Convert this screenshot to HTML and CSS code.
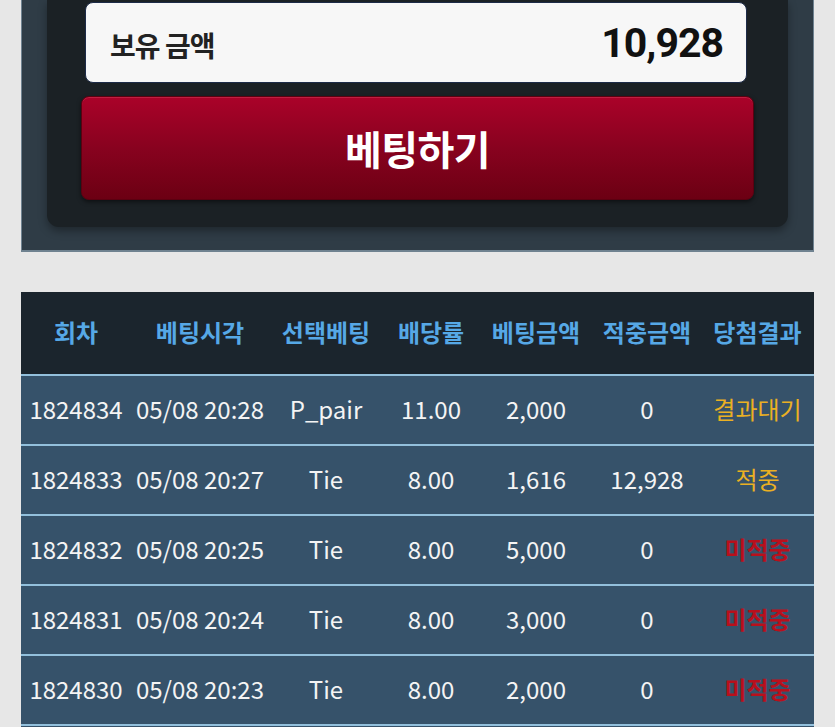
FILE: index.html
```html
<!DOCTYPE html>
<html>

<head>
  <meta charset="utf-8">
  <meta name="viewport" content="width=device-width">
  <title>베팅</title>
	<link rel="stylesheet" href="styles.css">
</head>

<body>
	<div class="wrap">
		<div class="bet-panel">
			<div class="bet-box">
				<div class="balance">
					<span class="balance-label">보유 금액</span>
					<span class="balance-value">10,928</span>
				</div>
				<button class="bet-btn">베팅하기</button>
			</div>
		</div>

		<table class="history">
			<colgroup>
				<col style="width:110px">
				<col style="width:138px">
				<col style="width:114px">
				<col style="width:96px">
				<col style="width:114px">
				<col style="width:108px">
				<col style="width:113px">
			</colgroup>
			<thead>
				<tr>
					<th>회차</th>
					<th>베팅시각</th>
					<th>선택베팅</th>
					<th>배당률</th>
					<th>베팅금액</th>
					<th>적중금액</th>
					<th>당첨결과</th>
				</tr>
			</thead>
			<tbody>
				<tr>
					<td>1824834</td><td>05/08 20:28</td><td>P_pair</td><td>11.00</td><td>2,000</td><td>0</td><td class="wait">결과대기</td>
				</tr>
				<tr>
					<td>1824833</td><td>05/08 20:27</td><td>Tie</td><td>8.00</td><td>1,616</td><td>12,928</td><td class="win">적중</td>
				</tr>
				<tr>
					<td>1824832</td><td>05/08 20:25</td><td>Tie</td><td>8.00</td><td>5,000</td><td>0</td><td class="lose">미적중</td>
				</tr>
				<tr>
					<td>1824831</td><td>05/08 20:24</td><td>Tie</td><td>8.00</td><td>3,000</td><td>0</td><td class="lose">미적중</td>
				</tr>
				<tr>
					<td>1824830</td><td>05/08 20:23</td><td>Tie</td><td>8.00</td><td>2,000</td><td>0</td><td class="lose">미적중</td>
				</tr>
				<tr class="empty">
					<td></td><td></td><td></td><td></td><td></td><td></td><td></td>
				</tr>
			</tbody>
		</table>
	</div>
</body>

</html>
```

FILE: styles.css
```css
html {
  height: 100%;
  width: 100%;
}

body {
	margin: 0;
	background-color: #e7e7e7;
	font-family: "Noto Sans CJK KR", "Noto Sans", sans-serif;
	overflow: hidden;
}

.wrap {
	padding: 0 21px;
}

.bet-panel {
	height: 250px;
	background-color: #2f3c46;
	border: 1px solid #6f8290;
	border-top: 0;
	border-bottom-width: 2px;
}

.bet-box {
	margin: 0 25px;
	padding: 2px 36px 27px;
	background-color: #1b2125;
	border-radius: 0 0 12px 12px;
	box-shadow: 0 4px 8px rgba(0, 0, 0, 0.35);
}

.balance {
	display: flex;
	align-items: center;
	justify-content: space-between;
	height: 79px;
	margin: 0 5px 13px 2px;
	padding: 0 23px 0 24px;
	background-color: #f7f7f7;
	border: 1px solid #1d2b48;
	border-radius: 8px;
}

.balance-label {
	font-size: 28px;
	font-weight: bold;
	color: #222;
	letter-spacing: -1px;
	padding-top: 4px;
}

.balance-value {
	font-family: Roboto, "Liberation Sans", sans-serif;
	font-size: 41px;
	font-weight: bold;
	color: #111;
	letter-spacing: -1px;
}

.bet-btn {
	display: block;
	width: calc(100% + 4px);
	height: 104px;
	margin-left: -2px;
	background: linear-gradient(#aa0229, #88021f 50%, #6c0013);
	border: 1px solid #5c0010;
	border-radius: 8px;
	box-shadow: inset 0 1px 0 rgba(255, 120, 140, 0.25), 0 2px 4px rgba(0, 0, 0, 0.5);
	color: white;
	font-family: "Noto Sans CJK KR", sans-serif;
	font-size: 40px;
	font-weight: bold;
	letter-spacing: -0.5px;
}

.history {
	width: 100%;
	margin-top: 40px;
	border-collapse: collapse;
	table-layout: fixed;
}

.history th {
	height: 78px;
	padding: 0 0 4px;
	background-color: #1b252d;
	color: #56a8e6;
	font-size: 24px;
	font-weight: bold;
	text-align: center;
	white-space: nowrap;
}

.history td {
	height: 65px;
	padding: 0 0 3px;
	background-color: #36526a;
	border-top: 2px solid #93c0dc;
	color: #f4f4f4;
	font-size: 24px;
	text-align: center;
	white-space: nowrap;
}

.history td.wait,
.history td.win {
	color: #eab023;
}

.history td.lose {
	color: #b8101c;
	font-weight: bold;
}
```
